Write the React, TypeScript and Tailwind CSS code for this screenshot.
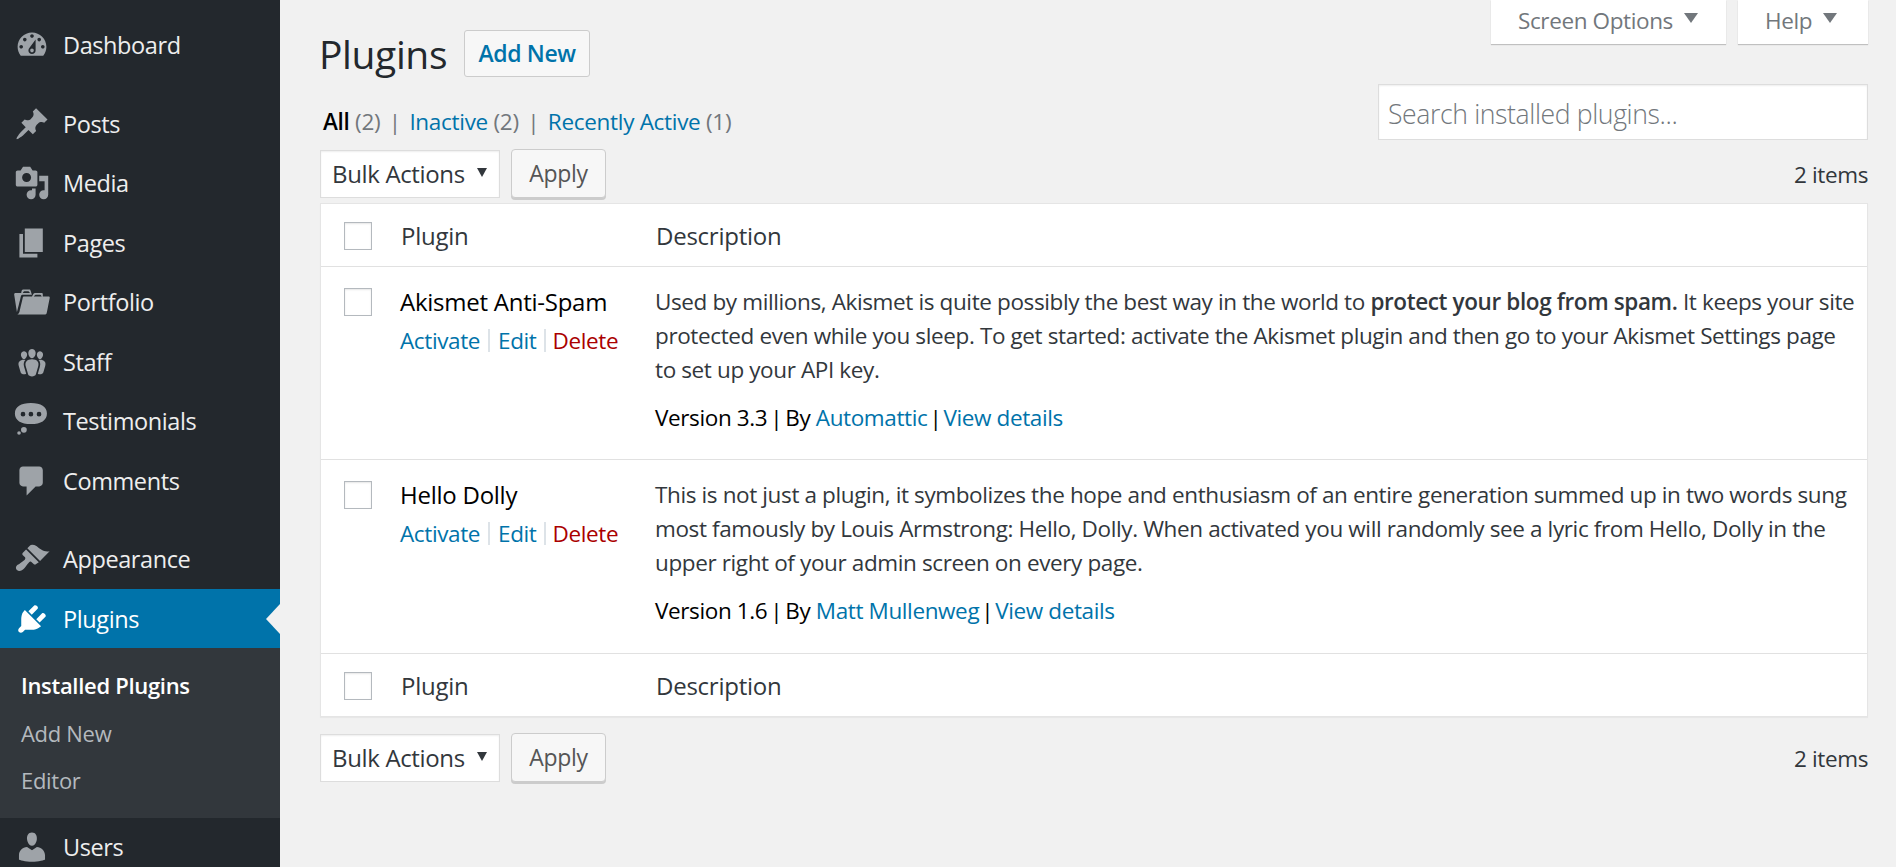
import React from "react";

const ICONS: Record<string, string> = {
  dashboard:
    "M3.76 16h12.48c1.1-1.37 1.76-3.11 1.76-5 0-4.42-3.58-8-8-8s-8 3.58-8 8c0 1.89.66 3.63 1.76 5zM10 4c.55 0 1 .45 1 1s-.45 1-1 1-1-.45-1-1 .45-1 1-1zM6 6c.55 0 1 .45 1 1s-.45 1-1 1-1-.45-1-1 .45-1 1-1zm8 0c.55 0 1 .45 1 1s-.45 1-1 1-1-.45-1-1 .45-1 1-1zm-5.37 5.55L12 7v6c0 1.1-.9 2-2 2s-2-.9-2-2c0-.57.24-1.08.63-1.45zM4 10c.55 0 1 .45 1 1s-.45 1-1 1-1-.45-1-1 .45-1 1-1zm12 0c.55 0 1 .45 1 1s-.45 1-1 1-1-.45-1-1 .45-1 1-1zm-5 3c0-.55-.45-1-1-1s-1 .45-1 1 .45 1 1 1 1-.45 1-1z",
  post: "M10.44 3.02l1.82-1.82 6.36 6.35-1.83 1.82c-1.05-.68-2.48-.57-3.41.36l-.75.75c-.92.93-1.04 2.35-.35 3.41l-1.83 1.82-2.41-2.41-2.8 2.79c-.42.42-3.38 2.71-3.8 2.29s1.86-3.39 2.28-3.81l2.79-2.79L4.1 9.36l1.83-1.82c1.05.69 2.48.57 3.41-.36l.75-.75c.93-.92 1.04-2.35.35-3.41z",
  media:
    "M13 11V4c0-.55-.45-1-1-1h-1.67L9 1H5L3.67 3H2c-.55 0-1 .45-1 1v7c0 .55.45 1 1 1h10c.55 0 1-.45 1-1zM7 4.5c1.38 0 2.5 1.12 2.5 2.5S8.38 9.5 7 9.5 4.5 8.38 4.5 7 5.62 4.5 7 4.5zM14 6h5v10.5c0 1.38-1.12 2.5-2.5 2.5S14 17.88 14 16.5s1.12-2.5 2.5-2.5c.17 0 .34.02.5.05V9h-3V6zm-4 8.05V13h2v3.5c0 1.38-1.12 2.5-2.5 2.5S7 17.88 7 16.5 8.12 14 9.5 14c.17 0 .34.02.5.05z",
  page: "M6 15V2h10v13H6zm-1 1h8v2H3V5h2v11z",
  portfolio:
    "M4 5H.78c-.37 0-.74.32-.69.84l1.56 9.99S3.5 8.47 3.86 6.7c.11-.53.61-.7.98-.7H10s-.7-2.08-.77-2.31C9.11 3.25 8.89 3 8.45 3H5.14c-.36 0-.7.23-.84.64C4.23 3.84 4 5 4 5zm4.88 0h-4s.42-1 .87-1h2.13c.48 0 1 1 1 1zM2.67 16.25c-.31.47-.76.75-1.26.75h15.73c.54 0 .92-.31 1.03-.83.44-2.19 1.68-8.44 1.68-8.44.07-.5-.3-.73-.62-.73H16V5.53c0-.16-.26-.53-.66-.53h-3.76c-.52 0-.87.58-.87.58L10 7H5.59c-.32 0-.63.19-.69.5 0 0-1.59 6.7-1.72 7.33-.07.37-.22.99-.51 1.42zM15.38 7H11s.58-1 1.13-1h2.29c.71 0 .96 1 .96 1z",
  groups:
    "M8.03 4.46c-.29 1.28.55 3.46 1.97 3.46 1.41 0 2.25-2.18 1.96-3.46-.22-.98-1.08-1.63-1.96-1.63-.89 0-1.74.65-1.97 1.63zm-4.13.9c-.25 1.08.47 2.93 1.66 2.93 1.2 0 1.92-1.85 1.67-2.93-.19-.83-.92-1.39-1.67-1.39s-1.48.56-1.66 1.39zm8.86 0c-.25 1.08.47 2.93 1.66 2.93 1.2 0 1.92-1.85 1.67-2.93-.19-.83-.92-1.39-1.67-1.39s-1.48.56-1.66 1.39zm-.59 11.43l1.25-4.3C14.2 10 12.71 8.47 10 8.47c-2.72 0-4.21 1.53-3.44 4.02l1.26 4.3C8.05 17.51 9 18 10 18c.98 0 1.94-.49 2.17-1.21zm-6.1-7.63c-.49.67-.96 1.83-.42 3.59l1.12 3.79c-.34.2-.77.31-1.2.31-.85 0-1.65-.41-1.85-1.03l-1.07-3.65c-.65-2.11.61-3.4 2.92-3.4.27 0 .54.02.79.06-.1.1-.2.22-.29.33zm8.35-.39c2.31 0 3.58 1.29 2.92 3.4l-1.07 3.65c-.2.62-1 1.03-1.85 1.03-.43 0-.86-.11-1.2-.31l1.11-3.77c.55-1.78.08-2.94-.42-3.61-.08-.11-.18-.23-.28-.33.25-.04.51-.06.79-.06z",
  status:
    "M9.4 0C15 0 18.3 2 18.3 5.8 18.3 9.6 15 11.7 9.4 11.7 3.800 11.700.5 9.600.5 5.800.5 2 3.800 0 9.400 0zM5 4.900a1.300 1.300 0 1 0 0 2.600 1.300 1.300 0 0 0 0-2.600zm4.400 0a1.300 1.300 0 1 0 0 2.600 1.300 1.300 0 0 0 0-2.600zm4.500 0a1.300 1.300 0 1 0 0 2.600 1.300 1.300 0 0 0 0-2.600zM5.500 13.300a1.600 1.600 0 1 1 0 3.200 1.600 1.600 0 0 1 0-3.200zM2.800 15.700a1 1 0 1 1 0 2 1 1 0 0 1 0-2z",
  comments: "M5 2h9c1.1 0 2 .9 2 2v7c0 1.1-.9 2-2 2h-2l-5 5v-5H5c-1.1 0-2-.9-2-2V4c0-1.1.9-2 2-2z",
  appearance:
    "M14.48 11.06L7.41 3.99l1.5-1.5c.5-.56 2.3-.47 3.51.32 1.21.8 1.43 1.28 2.91 2.1 1.18.64 2.45 1.26 4.45.85zm-.71.71L6.7 4.7 4.93 6.47c-.39.39-.39 1.02 0 1.41l1.06 1.06c.39.39.39 1.03 0 1.42-.6.6-1.43 1.11-2.21 1.69-.35.26-.7.53-1.01.84C1.43 13.23.4 14.85 1.65 16.1c1.25 1.25 2.87.22 4.23-1.14.31-.31.58-.66.84-1.01.58-.78 1.09-1.61 1.69-2.21.39-.39 1.03-.39 1.42 0l1.06 1.06c.39.39 1.02.39 1.41 0z",
  plugins:
    "M13.11 4.36L9.87 7.6 8 5.73l3.24-3.24c.35-.34 1.05-.2 1.56.32.52.51.66 1.21.31 1.55zm-8 1.77l.91-1.12 9.01 9.01-1.19.84c-.71.71-2.63 1.16-3.82 1.16H6.14L4.9 17.26c-.59.59-1.54.59-2.12 0-.59-.58-.59-1.53 0-2.12l1.24-1.24v-3.88c0-1.13.4-3.19 1.09-3.89zm7.26 3.97l3.24-3.24c.34-.35 1.04-.21 1.55.31.52.51.66 1.21.31 1.55l-3.24 3.25z",
  users:
    "M10 9.25c-2.27 0-2.73-3.44-2.73-3.44C7 4.02 7.82 2 9.97 2c2.16 0 2.98 2.02 2.71 3.81 0 0-.41 3.44-2.68 3.44zm0 2.57L12.72 10c2.39 0 4.52 2.33 4.52 4.53v2.49s-3.65 1.13-7.24 1.13c-3.65 0-7.24-1.13-7.24-1.13v-2.49c0-2.25 1.94-4.48 4.47-4.48z",
};

function MenuIcon({ name, active }: { name: string; active?: boolean }) {
  return (
    <svg viewBox="0 0 20 20" className={`w-9 h-9 shrink-0 fill-current ${active ? "text-white" : "text-[#9ea3a8]"}`}>
      <path fillRule="evenodd" d={ICONS[name]} />
    </svg>
  );
}

function MenuItem({ icon, label }: { icon: string; label: string }) {
  return (
    <div className="flex items-center h-[59.5px] pl-[14px] gap-[13px] text-[#eeeeee]">
      <MenuIcon name={icon} />
      <span className="mt-[1px]">{label}</span>
    </div>
  );
}

function Sidebar() {
  return (
    <aside className="w-[280px] shrink-0 h-full overflow-hidden bg-[#23282d] pt-[15px] text-[23.5px] tracking-[-0.4px]">
      <MenuItem icon="dashboard" label="Dashboard" />
      <div className="h-[19.5px]" />
      <MenuItem icon="post" label="Posts" />
      <MenuItem icon="media" label="Media" />
      <MenuItem icon="page" label="Pages" />
      <MenuItem icon="portfolio" label="Portfolio" />
      <MenuItem icon="groups" label="Staff" />
      <MenuItem icon="status" label="Testimonials" />
      <MenuItem icon="comments" label="Comments" />
      <div className="h-[19px]" />
      <MenuItem icon="appearance" label="Appearance" />

      <div className="relative flex items-center h-[59px] pl-[14px] gap-[13px] bg-[#0073aa] text-white">
        <MenuIcon name="plugins" active />
        <span className="mt-[1px]">Plugins</span>
        <div className="absolute right-0 top-[15px] w-0 h-0 border-y-[15px] border-y-transparent border-r-[14px] border-r-[#f1f1f1]" />
      </div>
      <div className="bg-[#32373c] pt-[14px] pb-[13px] pl-[21px] text-[22px] tracking-[-0.3px] leading-[47.5px] text-[#b4b9be]">
        <div className="font-semibold text-white">Installed Plugins</div>
        <div>Add New</div>
        <div>Editor</div>
      </div>

      <MenuItem icon="users" label="Users" />
    </aside>
  );
}

function TabButton({ label, className }: { label: string; className: string }) {
  return (
    <div className={`flex items-center gap-[11px] pl-[27px] pb-[4px] h-[44px] bg-white text-[#72777c] shadow-[0_1px_1px_rgba(0,0,0,0.2)] ${className}`}>
      <span>{label}</span>
      <span className="mb-[4px] w-0 h-0 border-x-[7px] border-x-transparent border-t-[10px] border-t-[#72777c]" />
    </div>
  );
}

function BulkActions() {
  return (
    <div className="flex items-center gap-[11px]">
      <div className="flex items-center justify-between w-[180px] h-[48px] pl-[11px] pr-[12px] bg-white border border-[#dddddd] text-[24px] tracking-[-0.35px] text-[#32373c] shadow-[inset_0_1px_2px_rgba(0,0,0,0.07)]">
        <span>Bulk Actions</span>
        <span className="mb-[3px] w-0 h-0 border-x-[5px] border-x-transparent border-t-[9px] border-t-[#32373c]" />
      </div>
      <button className="w-[95px] h-[49px] rounded-[4px] bg-[#f7f7f7] border border-[#cccccc] text-[23px] tracking-[-0.3px] text-[#555555] shadow-[0_2px_0_#cccccc]">
        Apply
      </button>
    </div>
  );
}

function CheckBox() {
  return (
    <input
      type="checkbox"
      className="appearance-none block w-[28px] h-[28px] bg-white border border-[#b4b9be] shadow-[inset_0_1px_2px_rgba(0,0,0,0.1)]"
    />
  );
}

function HeadRow({ top }: { top?: boolean }) {
  return (
    <div className={`flex items-center pl-[23px] text-[24px] tracking-[-0.25px] text-[#32373c] ${top ? "h-[63px] pt-[1px] border-b border-[#e1e1e1]" : "h-[62px] pt-[1px]"}`}>
      <CheckBox />
      <div className="w-[284px] pl-[29px]">Plugin</div>
      <div>Description</div>
    </div>
  );
}

type PluginRow = {
  name: string;
  desc: React.ReactNode;
  version: string;
  author: string;
};

function Row({ plugin, className }: { plugin: PluginRow; className: string }) {
  return (
    <div className={`flex items-start pl-[23px] border-b border-[#e1e1e1] ${className}`}>
      <div className="pt-[21px]">
        <CheckBox />
      </div>
      <div className="w-[284px] shrink-0 pl-[28px] pt-[17px]">
        <div className="text-[24px] tracking-[-0.25px] text-black">{plugin.name}</div>
        <div className="mt-[4px] flex items-center">
          <span className="text-[#0073aa]">Activate</span>
          <span className="mx-[8px] h-[23px] w-[2px] bg-[#dde3e8]" />
          <span className="text-[#0073aa]">Edit</span>
          <span className="mx-[7px] h-[23px] w-[2px] bg-[#dde3e8]" />
          <span className="text-[#aa0000]">Delete</span>
        </div>
      </div>
      <div className="-ml-[1px] pt-[18px] whitespace-nowrap leading-[34px] text-[#32373c]">
        <p>{plugin.desc}</p>
        <p className="mt-[14px] text-black">
          {plugin.version}
          <span className="mx-[3px]">|</span>
          By <span className="text-[#0073aa]">{plugin.author}</span>
          <span className="mx-[2px]">|</span>
          <span className="text-[#0073aa]">View details</span>
        </p>
      </div>
    </div>
  );
}

const PLUGINS: PluginRow[] = [
  {
    name: "Akismet Anti-Spam",
    desc: (
      <>
        Used by millions, Akismet is quite possibly the best way in the world to{" "}
        <strong className="font-semibold">protect your blog from spam.</strong> It keeps your site
        <br />
        protected even while you sleep. To get started: activate the Akismet plugin and then go to your Akismet Settings page
        <br />
        to set up your API key.
      </>
    ),
    version: "Version 3.3",
    author: "Automattic",
  },
  {
    name: "Hello Dolly",
    desc: (
      <>
        This is not just a plugin, it symbolizes the hope and enthusiasm of an entire generation summed up in two words sung
        <br />
        most famously by Louis Armstrong: Hello, Dolly. When activated you will randomly see a lyric from Hello, Dolly in the
        <br />
        upper right of your admin screen on every page.
      </>
    ),
    version: "Version 1.6",
    author: "Matt Mullenweg",
  },
];

export default function App() {
  return (
    <div className="flex w-[1896px] h-[867px] overflow-hidden bg-[#f1f1f1] font-['Open_Sans',sans-serif] text-[22.5px] leading-[35px] tracking-[-0.38px] text-[#444444]">
      <Sidebar />
      <main className="flex-1 pl-[40px] pr-[28px]">
        <div className="flex justify-between h-[203px]">
          {/* Title, filters, bulk actions */}
          <div className="pt-[30px]">
            <div className="flex items-center gap-[17px]">
              <h1 className="-ml-[1px] text-[39px] leading-[47px] text-[#23282d]">Plugins</h1>
              <button className="w-[126px] h-[47px] rounded-[3px] border border-[#cccccc] bg-[#f7f7f7] text-[23px] font-semibold tracking-[-0.4px] text-[#0073aa]">
                Add New
              </button>
            </div>
            <div className="mt-[27px] ml-[3px] h-[35px] whitespace-nowrap tracking-[-0.3px]">
              <span className="font-semibold text-black">All</span> <span className="text-[#72777c]">(2)</span>
              <span className="mx-[8.500px] text-[#72777c]">|</span>
              <span className="text-[#0073aa]">Inactive</span> <span className="text-[#72777c]">(2)</span>
              <span className="mx-[8.500px] text-[#72777c]">|</span>
              <span className="text-[#0073aa]">Recently Active</span> <span className="text-[#72777c]">(1)</span>
            </div>
            <div className="mt-[10px]">
              <BulkActions />
            </div>
          </div>

          {/* Screen options, search, count */}
          <div className="flex flex-col items-end w-[490px]">
            <div className="flex gap-[12px]">
              <TabButton label="Screen Options" className="w-[235px]" />
              <TabButton label="Help" className="w-[130px]" />
            </div>
            <input
              placeholder="Search installed plugins..."
              className="mt-[40px] w-[490px] h-[56px] px-[9px] pt-[3px] bg-white border border-[#dddddd] text-[26.6px] font-light outline-none placeholder:text-[#72777c] shadow-[inset_0_1px_2px_rgba(0,0,0,0.07)]"
            />
            <div className="mt-[17px] text-[#32373c]">2 items</div>
          </div>
        </div>

        <div className="bg-white border border-[#e5e5e5] shadow-[0_1px_1px_rgba(0,0,0,0.04)]">
          <HeadRow top />
          <Row plugin={PLUGINS[0]} className="h-[193px]" />
          <Row plugin={PLUGINS[1]} className="h-[194px]" />
          <HeadRow />
        </div>

        <div className="mt-[16px]">
          <BulkActions />
        </div>
        <div className="-mt-[41px] text-right text-[#32373c]">2 items</div>
      </main>
    </div>
  );
}
